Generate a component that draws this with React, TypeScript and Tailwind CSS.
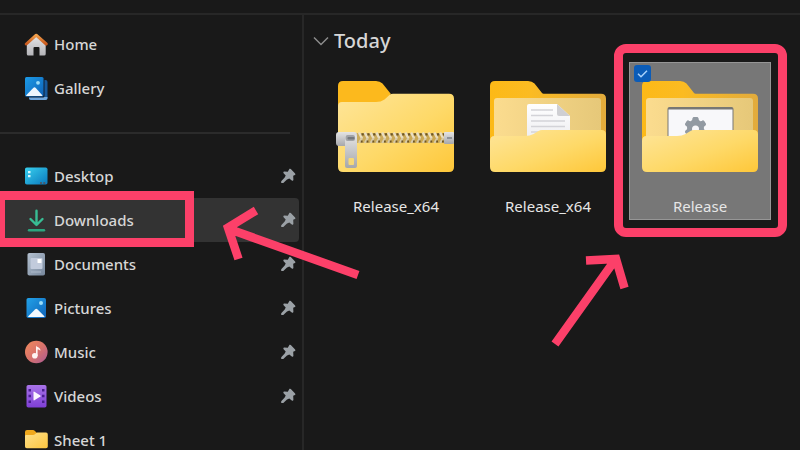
import { useState, type ReactNode } from "react";

function HomeIcon() {
  return (
    <svg viewBox="0 0 24 24" className="size-6">
      <defs>
        <linearGradient id="homeWall" x1="0" y1="0" x2="0" y2="1">
          <stop offset="0" stopColor="#e4e4e6" />
          <stop offset="1" stopColor="#b4b4b8" />
        </linearGradient>
        <linearGradient id="homeRoof" x1="0" y1="0" x2="0" y2="1">
          <stop offset="0" stopColor="#f0a04c" />
          <stop offset="1" stopColor="#c9581c" />
        </linearGradient>
      </defs>
      <path d="M2.800 11.500 12 4l9.700 7.500V22a1.500 1.500 0 0 1-1.500 1.500H15.500V16a1 1 0 0 0-1-1h-4a1 1 0 0 0-1 1v7.500H4.300A1.500 1.500 0 0 1 2.800 22z" fill="url(#homeWall)" />
      <path d="M2.300 12 12.200 3.200 22.200 12" fill="none" stroke="url(#homeRoof)" strokeWidth="3" strokeLinecap="round" strokeLinejoin="round" />
    </svg>
  );
}

function GalleryIcon() {
  return (
    <svg viewBox="0 0 24 24" className="size-6">
      <defs>
        <linearGradient id="galleryFace" x1="0" y1="0" x2="1" y2="1">
          <stop offset="0" stopColor="#1c9be6" />
          <stop offset="1" stopColor="#0f62b8" />
        </linearGradient>
      </defs>
      <rect x="5" y="4" width="18.500" height="20" rx="2" fill="#17599c" />
      <path d="M5 21h18.500v1a2 2 0 0 1-2 2H7a2 2 0 0 1-2-2z" fill="#6fa6dc" />
      <rect x="1" y="1" width="19.500" height="20.500" rx="1.500" fill="#111f30" />
      <rect x="1" y="1" width="18.500" height="19.500" rx="1.500" fill="url(#galleryFace)" />
      <path d="M2 19.500 9.200 12q1.300-1.300 2.600 0L18.500 19.500q-.5.500-1 .500H3q-.6 0-1-.500z" fill="#eef6fd" />
      <circle cx="14" cy="6.800" r="1.900" fill="#9adcf8" />
    </svg>
  );
}

function DesktopIcon() {
  return (
    <svg viewBox="0 0 24 24" className="size-6">
      <defs>
        <linearGradient id="deskFace" x1="0" y1="0" x2="1" y2="1">
          <stop offset="0" stopColor="#38d0ee" />
          <stop offset="1" stopColor="#0a78bd" />
        </linearGradient>
      </defs>
      <rect x="1" y="3.500" width="22.500" height="17" rx="1.800" fill="url(#deskFace)" />
      <path d="M4 7h2.500v2.300H4zM4 11h2.500v2.300H4z" fill="#d7f7ff" />
      <path d="M16 18.300h2v1.500h-2zM19.300 18.300h2v1.500h-2z" fill="#5b4f52" />
    </svg>
  );
}

function DownloadIcon() {
  return (
    <svg viewBox="0 0 24 24" className="size-6" fill="none" strokeLinecap="round" strokeLinejoin="round">
      <path d="M12.500 2.800v14M6.500 11l6 6 6-6" stroke="#38bd94" strokeWidth="2.400" />
      <path d="M5 22.200h15" stroke="#2ba57f" strokeWidth="2.400" />
    </svg>
  );
}

function DocumentIcon() {
  return (
    <svg viewBox="0 0 24 24" className="size-6">
      <defs>
        <linearGradient id="docFace" x1="0" y1="0" x2="1" y2="1">
          <stop offset="0" stopColor="#b3c0cf" />
          <stop offset="1" stopColor="#77879c" />
        </linearGradient>
      </defs>
      <rect x="3.500" y="1" width="17.500" height="22.500" rx="1.800" fill="url(#docFace)" />
      <rect x="6.500" y="6" width="12" height="11" rx="1" fill="#c2cbdc" />
      <rect x="13.500" y="7" width="4" height="4" rx=".6" fill="#ffffff" />
      <path d="M7 20h10" stroke="#a9b6c6" strokeWidth="1.200" />
    </svg>
  );
}

function PictureIcon() {
  return (
    <svg viewBox="0 0 24 24" className="size-6">
      <defs>
        <linearGradient id="picFace" x1="0" y1="0" x2="1" y2="1">
          <stop offset="0" stopColor="#22a2e8" />
          <stop offset="1" stopColor="#0f62b8" />
        </linearGradient>
      </defs>
      <rect x="2.500" y="2" width="19.500" height="20" rx="1.800" fill="url(#picFace)" />
      <path d="M4 20.500 11 13.500q1.300-1.300 2.600 0l7 7q-.6.500-1.300.500H5.300q-.8 0-1.300-.500z" fill="#f1f8fe" />
      <circle cx="17" cy="7" r="2" fill="#9adcf8" />
    </svg>
  );
}

function MusicIcon() {
  return (
    <svg viewBox="0 0 24 24" className="size-6">
      <defs>
        <linearGradient id="musicFace" x1="0" y1="0" x2="1" y2="1">
          <stop offset="0" stopColor="#f08a5c" />
          <stop offset=".5" stopColor="#d9736b" />
          <stop offset="1" stopColor="#a95a94" />
        </linearGradient>
      </defs>
      <circle cx="12.300" cy="12" r="11.300" fill="url(#musicFace)" />
      <circle cx="10.800" cy="15.800" r="2.800" fill="#fff4f2" />
      <path d="M12 5.500c.8 2 4.500 1.600 4.500 5.200-1-.9-2-1.200-2.900-1.200V16H12z" fill="#fff4f2" />
    </svg>
  );
}

function VideoIcon() {
  return (
    <svg viewBox="0 0 24 24" className="size-6">
      <defs>
        <linearGradient id="videoFace" x1="0" y1="0" x2="0" y2="1">
          <stop offset="0" stopColor="#a873e8" />
          <stop offset="1" stopColor="#7f3fd6" />
        </linearGradient>
      </defs>
      <rect x="2.500" y="1" width="20" height="22.500" rx="1.800" fill="url(#videoFace)" />
      <path d="M4.500 5H7v2.500H4.500zM4.500 10.700H7v2.500H4.500zM4.500 16.500H7V19H4.500zM18 5h2.500v2.500H18zM18 10.700h2.500v2.500H18zM18 16.500h2.500V19H18z" fill="#4a1f8f" />
      <path d="M9.500 8.200v7.600q0 1 .9.500l6-3.700q.8-.6 0-1.200l-6-3.700q-.9-.5-.9.500z" fill="#fbf4ff" />
    </svg>
  );
}

function SmallFolderIcon() {
  return (
    <svg viewBox="0 0 24 24" className="size-6">
      <defs>
        <linearGradient id="smallFace" x1="0" y1="0" x2="1" y2="1">
          <stop offset="0" stopColor="#ffe08a" />
          <stop offset="1" stopColor="#fcc63f" />
        </linearGradient>
      </defs>
      <path d="M1 4a2 2 0 0 1 2-2h6q1 0 1.700.7L13 5v6H1z" fill="#f0a81c" />
      <path d="M1 8q0-1 1.200-1H9q1.200 0 2-.8L12.300 5q.4-.4 1-.4H22a1.800 1.800 0 0 1 1.800 1.800v12A1.800 1.800 0 0 1 22 20.200H2.800A1.800 1.800 0 0 1 1 18.400z" fill="url(#smallFace)" />
    </svg>
  );
}

function PinIcon() {
  return (
    <svg viewBox="0 0 16 16" className="size-4" fill="#9ba1a6">
      <path d="M9.500.8q.7-.4 1.300.2l4.300 4.500q.8 1-.2 1.500l-1.700.8.200 4q-.3 1.600-1.600.6L9.300 10.500 7 11.600 3.300 15H1.200v-1.800l3.500-3.600 1-2.200L3.600 5.200q-1-1.300.6-1.600l3.600.2z" />
    </svg>
  );
}

const FRONT =
  "M0 60q0-5 4.500-5H35q5 0 8.500-2l5-3q1.500-1 3.500-1h59.500q4.500 0 4.500 4.500V86q0 5-5 5H5q-5 0-5-5z";

function FolderGradients() {
  return (
    <svg className="absolute size-0" aria-hidden="true">
      <defs>
        <linearGradient id="front" x1="0" y1="0" x2="1" y2="1">
          <stop offset="0" stopColor="#fee59a" />
          <stop offset=".55" stopColor="#fed968" />
          <stop offset="1" stopColor="#fec739" />
        </linearGradient>
        <linearGradient id="back" x1="0" y1="0" x2="1" y2="0">
          <stop offset="0" stopColor="#fcb917" />
          <stop offset=".35" stopColor="#fbbb22" />
          <stop offset="1" stopColor="#e2ab3c" />
        </linearGradient>
        <linearGradient id="inside" x1="0" y1="0" x2="1" y2="0">
          <stop offset="0" stopColor="#fbdc8f" />
          <stop offset="1" stopColor="#e6c879" />
        </linearGradient>
        <linearGradient id="metal" x1="0" y1="0" x2="0" y2="1">
          <stop offset="0" stopColor="#e4e4e4" />
          <stop offset="1" stopColor="#a6a7ab" />
        </linearGradient>
        <linearGradient id="sheet" x1="0" y1="0" x2="0" y2="1">
          <stop offset="0" stopColor="#ffffff" />
          <stop offset="1" stopColor="#ececf0" />
        </linearGradient>
      </defs>
    </svg>
  );
}

function ZipFolder() {
  const teeth = Array.from({ length: 15 }, (_, i) => 21 + i * 5.8);
  return (
    <svg viewBox="0 0 116 92" className="h-[92px] w-[116px] overflow-visible">
      <path d="M0 5q0-5 5-5h33q4 0 6.500 2.500l8 10V30H0z" fill="#fcb91d" />
      <path d="M0 25q0-4 4-4h34q5 0 8.500-2.500l5-4.500q1.500-1.200 3.500-1.200h56q5 0 5 5V86q0 5-5 5H5q-5 0-5-5z" fill="url(#front)" />
      <rect x="18" y="52" width="90" height="10" fill="#a08347" opacity=".55" />
      {teeth.map((x) => (
        <g key={x}>
          <path d={`M${x} 51.500l3 6`} stroke="#eadfc2" strokeWidth="2.400" />
          <path d={`M${x + 3} 57l-3 5`} stroke="#d8cba9" strokeWidth="2.200" />
          <path d={`M${x + 2.6} 52.200h2.200v2.300h-2.200zM${x + 1.800} 59.500h1.800v2h-1.800z`} fill="#6c5526" />
        </g>
      ))}
      <rect x="106" y="51" width="10" height="12" rx="1" fill="url(#metal)" />
      <path d="M109 57h5" stroke="#8e9298" strokeWidth="2" />
      <path d="M-2 54q0-3 3-3h15q3 0 3 3v8H7v3H1q-3 0-3-3z" fill="url(#metal)" />
      <path d="M7 56q0-2 2-2h8q2 0 2 2v29q0 2-2 2H9q-2 0-2-2z" fill="url(#metal)" />
      <rect x="7.500" y="54" width="9.500" height="6" rx="2" fill="#a2a4a8" />
      <rect x="9.500" y="56" width="7" height="2.500" rx="1" fill="#75797e" />
      <rect x="10.500" y="77" width="5.500" height="7" rx="1" fill="#f6d877" />
    </svg>
  );
}

function OpenFolder({ children }: { children: ReactNode }) {
  return (
    <svg viewBox="0 0 116 92" className="h-[92px] w-[116px] overflow-visible">
      <path d="M0 5q0-5 5-5h33q4 0 6.500 2.500l7.500 9.500q.6.700 1.500.7H111q5 0 5 5V80H0z" fill="url(#back)" />
      <path d="M4 20q0-3 3-3h101q3 0 3 3v45H4z" fill="url(#inside)" />
      {children}
      <path d={FRONT} fill="url(#front)" />
    </svg>
  );
}

function DocumentFolder() {
  return (
    <OpenFolder>
      <path d="M37 25q0-2 2-2h28l13 12v25H37z" fill="url(#sheet)" />
      <path d="M67 23v10q0 2 2 2h11z" fill="#cfcfd3" />
      <path d="M41 29h22M41 34.500h22M41 40h34M41 45.500h34M41 51h30" stroke="#d3d3d8" strokeWidth="1.500" />
    </OpenFolder>
  );
}

function ProgramFolder() {
  const spokes = [0, 60, 120, 180, 240, 300];
  return (
    <OpenFolder>
      <rect x="25.500" y="26" width="66" height="35" rx="2" fill="#777774" />
      <rect x="26.500" y="28.500" width="64" height="33" fill="#f8f8fa" />
      <g fill="#929aa2">
        {spokes.map((a) => (
          <rect key={a} x="50.500" y="36" width="6" height="22" rx="2" transform={`rotate(${a} 53.500 47)`} />
        ))}
        <circle cx="53.500" cy="47" r="8.500" />
      </g>
      <circle cx="53.500" cy="48" r="3.500" fill="#f8f8fa" />
    </OpenFolder>
  );
}

type Place = { name: string; icon: ReactNode; pinned?: boolean; current?: boolean };

const top: Place[] = [
  { name: "Home", icon: <HomeIcon /> },
  { name: "Gallery", icon: <GalleryIcon /> },
];

const quick: Place[] = [
  { name: "Desktop", icon: <DesktopIcon />, pinned: true },
  { name: "Downloads", icon: <DownloadIcon />, pinned: true, current: true },
  { name: "Documents", icon: <DocumentIcon />, pinned: true },
  { name: "Pictures", icon: <PictureIcon />, pinned: true },
  { name: "Music", icon: <MusicIcon />, pinned: true },
  { name: "Videos", icon: <VideoIcon />, pinned: true },
  { name: "Sheet 1", icon: <SmallFolderIcon /> },
];

function PlaceRow({ name, icon, pinned, current }: Place) {
  return (
    <li className="relative">
      <a
        href={`#${name}`}
        aria-current={current ? "page" : undefined}
        className={`mr-[3px] flex h-11 items-center gap-1.5 pr-[3px] pl-6 ${current ? "rounded-r-sm bg-[#333333]" : ""}`}
      >
        {icon}
        <span className="flex-1">{name}</span>
        {pinned && <PinIcon />}
      </a>
      {current && (
        <span className="pointer-events-none absolute -top-[7px] -left-1 h-14 w-[198px] border-9 border-[#fc4069]" />
      )}
    </li>
  );
}

type Item = { id: string; name: string; art: ReactNode };

const items: Item[] = [
  { id: "zip", name: "Release_x64", art: <ZipFolder /> },
  { id: "docs", name: "Release_x64", art: <DocumentFolder /> },
  { id: "app", name: "Release", art: <ProgramFolder /> },
];

function Tile({ item, checked, onToggle }: { item: Item; checked: boolean; onToggle: () => void }) {
  return (
    <li className="relative">
      <label
        className={`flex h-[158px] w-[142px] flex-col items-center border pt-[18px] ${
          checked ? "border-[#969696] bg-[#777777]" : "border-transparent"
        }`}
      >
        <input
          type="checkbox"
          checked={checked}
          onChange={onToggle}
          className="absolute top-[3px] left-[5px] size-[17px] appearance-none rounded-[3px] checked:bg-[#0b5cb8]"
        />
        {checked && (
          <svg viewBox="0 0 17 17" className="pointer-events-none absolute top-[3px] left-[5px] size-[17px]">
            <path d="m4 8.800 3 3 6-6" fill="none" stroke="#a9d2fb" strokeWidth="1.500" />
          </svg>
        )}
        {item.art}
        <span className="mt-[22px] leading-[22px]">{item.name}</span>
      </label>
      {checked && (
        <span className="pointer-events-none absolute -top-[18px] -left-[15px] h-[193px] w-[173px] rounded-xl border-9 border-[#fc4069]" />
      )}
    </li>
  );
}

function Arrows() {
  return (
    <svg
      className="pointer-events-none absolute top-0 left-0 h-[450px] w-[800px]"
      viewBox="0 0 800 450"
      fill="none"
      stroke="#fc4069"
      strokeWidth="8.500"
      aria-hidden="true"
    >
      <path d="M256 210.500 228 227.500 238.500 259M229 229l129 46" />
      <path d="M586 260.500l30-1.500 8.500 29M555 344l60-84" />
    </svg>
  );
}

export default function App() {
  const [selected, setSelected] = useState("app");
  return (
    <div className="relative flex h-screen flex-col overflow-hidden bg-[#191919] font-['Noto_Sans','Open_Sans',sans-serif] text-[15px] font-medium text-[#d6d6d6]">
      <FolderGradients />
      <header className="h-[15px] shrink-0 border-b-2 border-[#272727]" />
      <div className="flex min-h-0 flex-1">
        <nav className="w-[304px] shrink-0 border-r-2 border-[#272727] pt-[7px]">
          <ul>
            {top.map((p) => (
              <PlaceRow key={p.name} {...p} />
            ))}
          </ul>
          <hr className="mt-[22px] mr-3 mb-5 border-t-2 border-[#2b2b2b]" />
          <ul>
            {quick.map((p) => (
              <PlaceRow key={p.name} {...p} />
            ))}
          </ul>
        </nav>
        <main className="min-w-0 flex-1 pt-2.5 pl-2">
          <button type="button" className="flex h-8 items-center gap-1 text-xl">
            <svg viewBox="0 0 18 18" className="size-[18px]" fill="none" stroke="#8c8c8c" strokeWidth="1.500">
              <path d="m2 5.500 7 7 7-7" />
            </svg>
            Today
          </button>
          <ul className="mt-[5px] ml-[13px] flex gap-2.5 font-normal text-[#e6e6e6]">
            {items.map((item) => (
              <Tile key={item.id} item={item} checked={selected === item.id} onToggle={() => setSelected(item.id)} />
            ))}
          </ul>
        </main>
      </div>
      <Arrows />
    </div>
  );
}
